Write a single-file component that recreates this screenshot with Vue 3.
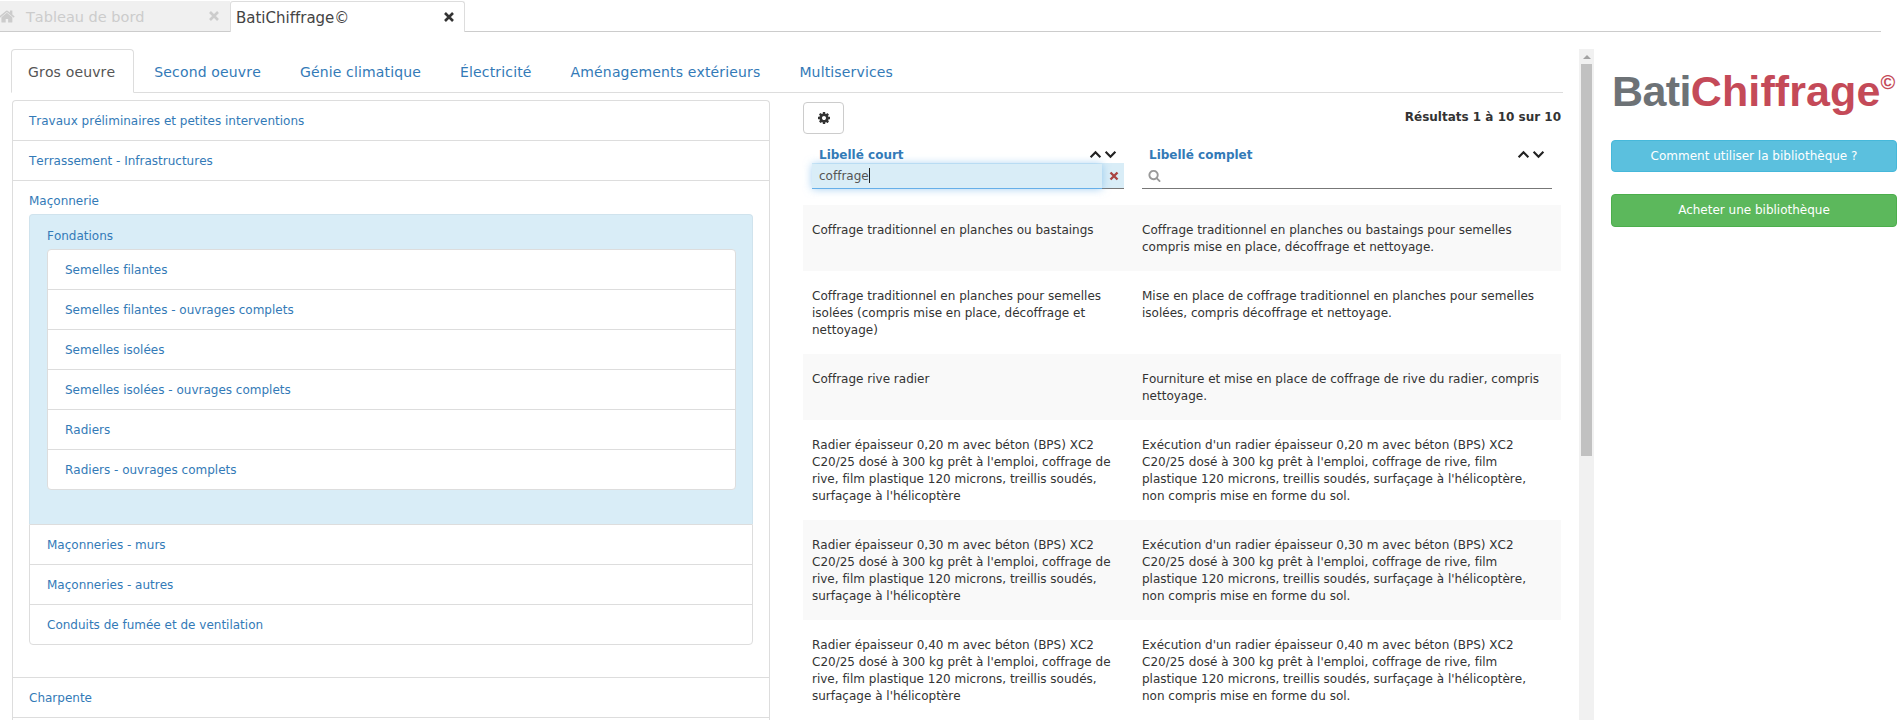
<template>
  <div class="page">
    <div class="top-tabs">
      <div class="top-tab inactive">
        <svg class="home" viewBox="0 0 1792 1792"><path :d="homePath" /></svg>
        <span class="top-label">Tableau de bord</span>
        <svg class="close" viewBox="0 0 12 12"><path d="M2 2l8 8M10 2l-8 8" /></svg>
      </div>
      <div class="top-tab active">
        <span class="top-label">BatiChiffrage©</span>
        <svg class="close" viewBox="0 0 12 12"><path d="M2 2l8 8M10 2l-8 8" /></svg>
      </div>
    </div>

    <div class="main">
      <div class="content">
        <ul class="nav">
          <li v-for="(t, i) in navTabs" :key="t" class="nav-item" :class="{ current: i === 0 }">{{ t }}</li>
        </ul>

        <div class="columns">
          <div class="tree">
            <div class="tree-item">Travaux préliminaires et petites interventions</div>
            <div class="tree-item">Terrassement - Infrastructures</div>
            <div class="tree-item open">
              <div class="open-title">Maçonnerie</div>
              <div class="sub-panel">
                <div class="sub-title">Fondations</div>
                <div class="leaf-list">
                  <div v-for="l in leaves" :key="l" class="leaf">{{ l }}</div>
                </div>
              </div>
              <div class="sub-list">
                <div v-for="s in subItems" :key="s" class="sub-item">{{ s }}</div>
              </div>
            </div>
            <div class="tree-item">Charpente</div>
          </div>

          <div class="results">
            <div class="toolbar">
              <button class="gear-btn">
                <svg viewBox="0 0 1792 1792"><path :d="cogPath" /></svg>
              </button>
              <span class="count">Résultats 1 à 10 sur 10</span>
            </div>

            <div class="head-row">
              <div class="head-cell first">
                <div class="head-top">
                  <span class="head-title">Libellé court</span>
                  <span class="sort">
                    <svg viewBox="0 0 12 8"><path d="M1.500 6.500L6 2l4.500 4.500" /></svg>
                    <svg viewBox="0 0 12 8"><path d="M1.500 1.500L6 6l4.500-4.500" /></svg>
                  </span>
                </div>
                <div class="filter filled">
                  <div class="filter-input">coffrage<span class="caret"></span></div>
                  <svg class="clear" viewBox="0 0 12 12"><path d="M2.500 2.500l7 7M9.500 2.500l-7 7" /></svg>
                </div>
              </div>
              <div class="head-cell second">
                <div class="head-top">
                  <span class="head-title">Libellé complet</span>
                  <span class="sort">
                    <svg viewBox="0 0 12 8"><path d="M1.500 6.500L6 2l4.500 4.500" /></svg>
                    <svg viewBox="0 0 12 8"><path d="M1.500 1.500L6 6l4.500-4.500" /></svg>
                  </span>
                </div>
                <div class="filter">
                  <svg class="search" viewBox="0 0 1792 1792"><path :d="searchPath" /></svg>
                </div>
              </div>
            </div>

            <div v-for="(r, i) in rows" :key="i" class="row" :class="{ odd: i % 2 === 0 }">
              <div class="cell">{{ r[0] }}</div>
              <div class="cell wide">{{ r[1] }}</div>
            </div>
          </div>
        </div>
      </div>

      <div class="scrollbar">
        <div class="scroll-up"></div>
        <div class="scroll-thumb"></div>
      </div>

      <aside class="side">
        <div class="logo"><span class="logo-grey">Bati</span><span class="logo-red">Chiffrage</span><span class="logo-c">©</span></div>
        <button class="side-btn info">Comment utiliser la bibliothèque ?</button>
        <button class="side-btn success">Acheter une bibliothèque</button>
      </aside>
    </div>
  </div>
</template>

<script setup>
const homePath = 'M1408 992v480q0 26-19 45t-45 19h-384v-384h-256v384h-384q-26 0-45-19t-19-45v-480q0-1 .5-3t.5-3l575-474 575 474q1 2 1 6zm223-69l-62 74q-8 9-21 11h-3q-13 0-21-7l-692-577-692 577q-12 8-24 7-13-2-21-11l-62-74q-8-10-7-23.500t11-21.500l719-599q32-26 76-26t76 26l244 204v-195q0-14 9-23t23-9h192q14 0 23 9t9 23v408l219 182q10 8 11 21.500t-7 23.500z'
const cogPath = 'M1152 896q0-106-75-181t-181-75-181 75-75 181 75 181 181 75 181-75 75-181zm512-109v222q0 12-8 23t-20 13l-185 28q-19 54-39 91 35 50 107 138 10 12 10 25t-9 23q-27 37-99 108t-94 71q-12 0-26-9l-138-108q-44 23-91 38-16 136-29 186-7 28-36 28h-222q-14 0-24.500-8.500t-11.500-21.500l-28-184q-49-16-90-37l-141 107q-10 9-25 9-14 0-25-11-126-114-165-168-7-10-7-23 0-12 8-23 15-21 51-66.500t54-70.500q-27-50-41-99l-183-27q-13-2-21-12.500t-8-23.500v-222q0-12 8-23t19-13l186-28q14-46 39-92-40-57-107-138-10-12-10-24 0-10 9-23 26-36 98.500-107.500t94.500-71.500q13 0 26 10l138 107q44-23 91-38 16-136 29-186 7-28 36-28h222q14 0 24.500 8.500t11.500 21.500l28 184q49 16 90 37l142-107q9-9 24-9 13 0 25 10 129 119 165 170 7 8 7 22 0 12-8 23-15 21-51 66.500t-54 70.500q26 50 41 98l183 28q13 2 21 12.500t8 23.500z'
const searchPath = 'M1216 832q0-185-131.500-316.500t-316.500-131.500-316.500 131.500-131.500 316.500 131.500 316.500 316.500 131.500 316.500-131.500 131.500-316.500zm512 832q0 52-38 90t-90 38q-54 0-90-38l-343-342q-179 124-399 124-143 0-273.500-55.500t-225-150-150-225-55.500-273.500 55.500-273.500 150-225 225-150 273.500-55.500 273.500 55.500 225 150 150 225 55.500 273.500q0 220-124 399l343 343q37 37 37 90z'

const navTabs = ['Gros oeuvre', 'Second oeuvre', 'Génie climatique', 'Électricité', 'Aménagements extérieurs', 'Multiservices']

const leaves = [
  'Semelles filantes',
  'Semelles filantes - ouvrages complets',
  'Semelles isolées',
  'Semelles isolées - ouvrages complets',
  'Radiers',
  'Radiers - ouvrages complets'
]

const subItems = ['Maçonneries - murs', 'Maçonneries - autres', 'Conduits de fumée et de ventilation']

const radier = (e) => [
  `Radier épaisseur ${e} m avec béton (BPS) XC2 C20/25 dosé à 300 kg prêt à l'emploi, coffrage de rive, film plastique 120 microns, treillis soudés, surfaçage à l'hélicoptère`,
  `Exécution d'un radier épaisseur ${e} m avec béton (BPS) XC2 C20/25 dosé à 300 kg prêt à l'emploi, coffrage de rive, film plastique 120 microns, treillis soudés, surfaçage à l'hélicoptère, non compris mise en forme du sol.`
]

const rows = [
  ['Coffrage traditionnel en planches ou bastaings', 'Coffrage traditionnel en planches ou bastaings pour semelles compris mise en place, décoffrage et nettoyage.'],
  ['Coffrage traditionnel en planches pour semelles isolées (compris mise en place, décoffrage et nettoyage)', 'Mise en place de coffrage traditionnel en planches pour semelles isolées, compris décoffrage et nettoyage.'],
  ['Coffrage rive radier', 'Fourniture et mise en place de coffrage de rive du radier, compris nettoyage.'],
  radier('0,20'),
  radier('0,30'),
  radier('0,40')
]
</script>

<style>
html, body {
  margin: 0;
  height: 720px;
  overflow: hidden;
  background: #fff;
}
</style>

<style scoped>
.page {
  font-family: "DejaVu Sans", Verdana, sans-serif;
  font-size: 12px;
  line-height: 17px;
  color: #333;
  height: 720px;
  overflow: hidden;
  text-rendering: optimizeSpeed;
  font-kerning: none;
}

.top-tabs {
  display: flex;
  width: 1881px;
  height: 31px;
  border-bottom: 1px solid #ccc;
}

.top-tab {
  display: flex;
  align-items: center;
  height: 30px;
  margin-top: 1px;
  box-sizing: border-box;
  font-size: 14.5px;
}

.top-tab.inactive {
  width: 230px;
  background: #f0f0f0;
  color: #ccc;
}

.top-tab.active {
  width: 235px;
  height: 31px;
  background: #fff;
  border: 1px solid #ddd;
  border-bottom: none;
  border-radius: 3px 3px 0 0;
  padding-left: 5px;
  color: #444;
  font-size: 15px;
  margin-bottom: -1px;
}

.home {
  width: 17px;
  height: 17px;
  fill: #ccc;
  margin: 0 10px 0 -1px;
}

.top-label {
  flex: 1;
  padding-top: 2px;
}

.close {
  width: 12px;
  height: 12px;
  margin-right: 10px;
  fill: none;
  stroke: #333;
  stroke-width: 2.6;
}

.active .close {
  margin-right: 9px;
}

.inactive .close {
  stroke: #ccc;
}

.main {
  display: flex;
  align-items: flex-start;
  padding: 17px 0 0 11px;
}

.content {
  width: 1552px;
  flex: none;
}

.nav {
  display: flex;
  list-style: none;
  margin: 0;
  padding: 0;
  height: 43px;
  border-bottom: 1px solid #ddd;
  font-size: 14px;
  letter-spacing: 0.15px;
}

.nav-item {
  height: 43px;
  box-sizing: border-box;
  padding: 12px 17px 0;
  line-height: 20px;
  margin-right: 3px;
  color: #337ab7;
  border: 1px solid transparent;
  border-radius: 4px 4px 0 0;
}

.nav-item.current {
  height: 44px;
  color: #555;
  background: #fff;
  border-color: #ddd;
  border-bottom-color: #fff;
  padding-left: 16px;
  padding-right: 18px;
  margin-right: 2px;
}

.columns {
  display: grid;
  grid-template-columns: 758px 758px;
  column-gap: 33px;
  padding: 7px 0 0 1px;
}

.tree {
  border: 1px solid #ddd;
  border-bottom: none;
  border-radius: 4px 4px 0 0;
  color: #337ab7;
}

.tree-item {
  padding: 12px 16px 10px;
  border-bottom: 1px solid #ddd;
}

.tree-item.open {
  padding-bottom: 32px;
}

.open-title {
  margin-bottom: 4px;
}

.sub-panel {
  background: #d9edf7;
  border: 1px solid #d0e3ed;
  border-bottom: none;
  border-radius: 4px 4px 0 0;
  padding: 13px 16px 34px 17px;
}

.sub-title {
  margin-bottom: 4px;
}

.leaf-list {
  background: #fff;
  border: 1px solid #ddd;
  border-radius: 4px;
}

.leaf {
  padding: 12px 16px 10px 17px;
  height: 17px;
  border-bottom: 1px solid #ddd;
}

.leaf:last-child {
  border-bottom: none;
}

.sub-list {
  border: 1px solid #ddd;
  border-radius: 0 0 4px 4px;
}

.sub-item {
  padding: 12px 17px 10px;
  border-bottom: 1px solid #ddd;
}

.sub-item:last-child {
  border-bottom: none;
}

.toolbar {
  display: flex;
  justify-content: space-between;
  align-items: center;
  height: 33px;
  margin-top: 1px;
}

.gear-btn {
  width: 41px;
  height: 32px;
  padding: 0;
  background: #fff;
  border: 1px solid #ccc;
  border-radius: 4px;
  display: flex;
  align-items: center;
  justify-content: center;
}

.gear-btn svg {
  width: 14px;
  height: 14px;
  fill: #333;
}

.count {
  font-weight: 700;
}

.head-row {
  display: grid;
  grid-template-columns: 330px 1fr;
  margin-top: 12px;
  height: 59px;
}

.head-cell {
  padding: 0 9px;
}

.head-top {
  display: flex;
  justify-content: space-between;
  height: 17px;
  padding-left: 7px;
}

.head-title {
  font-weight: 700;
  color: #337ab7;
  padding-top: 1px;
}

.sort {
  display: flex;
  align-items: center;
  gap: 2px;
  margin-right: 7px;
}

.sort svg {
  width: 13px;
  height: 9px;
  fill: none;
  stroke: #222;
  stroke-width: 2;
}

.filter {
  display: flex;
  align-items: center;
  height: 25px;
  border-bottom: 1px solid #777;
}

.filter.filled {
  background: #d9edf7;
}

.filter-input {
  flex: 1;
  height: 25px;
  margin-bottom: -1px;
  line-height: 25px;
  padding-left: 7px;
  color: #555;
  border-bottom: 1px solid #66afe9;
  box-sizing: border-box;
  box-shadow: 0 0 8px rgba(102, 175, 233, 0.6);
}

.caret {
  display: inline-block;
  width: 1px;
  height: 15px;
  background: #222;
  vertical-align: -3px;
}

.clear {
  width: 12px;
  height: 12px;
  margin: 0 4px 0 6px;
  fill: none;
  stroke: #a94442;
  stroke-width: 2.4;
}

.search {
  width: 13px;
  height: 13px;
  margin-left: 6px;
  fill: #999;
}

.row {
  display: grid;
  grid-template-columns: 330px 1fr;
}

.row.odd {
  background: #f9f9f9;
}

.cell {
  padding: 17px 9px 15px;
}

.cell.wide {
  padding-right: 16px;
}

.scrollbar {
  flex: none;
  width: 15px;
  height: 671px;
  margin-left: 16px;
  background: #f1f1f1;
}

.scroll-up {
  width: 0;
  height: 0;
  margin: 6px auto 5px;
  border-left: 4px solid transparent;
  border-right: 4px solid transparent;
  border-bottom: 4px solid #a3a3a3;
}

.scroll-thumb {
  width: 11px;
  height: 392px;
  margin: 0 auto;
  background: #c1c1c1;
}

.side {
  flex: none;
  width: 286px;
  margin-left: 17px;
}

.logo {
  display: flex;
  align-items: flex-start;
  height: 91px;
  padding: 17px 0 0 1px;
  box-sizing: border-box;
  font-family: "Liberation Sans", Arial, sans-serif;
  font-weight: 700;
  font-size: 43px;
  line-height: 50px;
  white-space: nowrap;
}

.logo-grey {
  color: #6d7276;
  letter-spacing: -0.6px;
}

.logo-red {
  color: #c44a58;
  letter-spacing: 0.1px;
}

.logo-c {
  color: #c44a58;
  font-size: 20px;
  line-height: 22px;
  margin-top: 5px;
}

.side-btn {
  display: block;
  width: 286px;
  height: 32px;
  padding: 0;
  margin-bottom: 22px;
  border: 1px solid transparent;
  border-radius: 4px;
  color: #fff;
  font: 12px/17px "DejaVu Sans", Verdana, sans-serif;
}

.side-btn.info {
  background: #5bc0de;
  border-color: #46b8da;
}

.side-btn.success {
  height: 33px;
  background: #5cb85c;
  border-color: #4cae4c;
}
</style>
